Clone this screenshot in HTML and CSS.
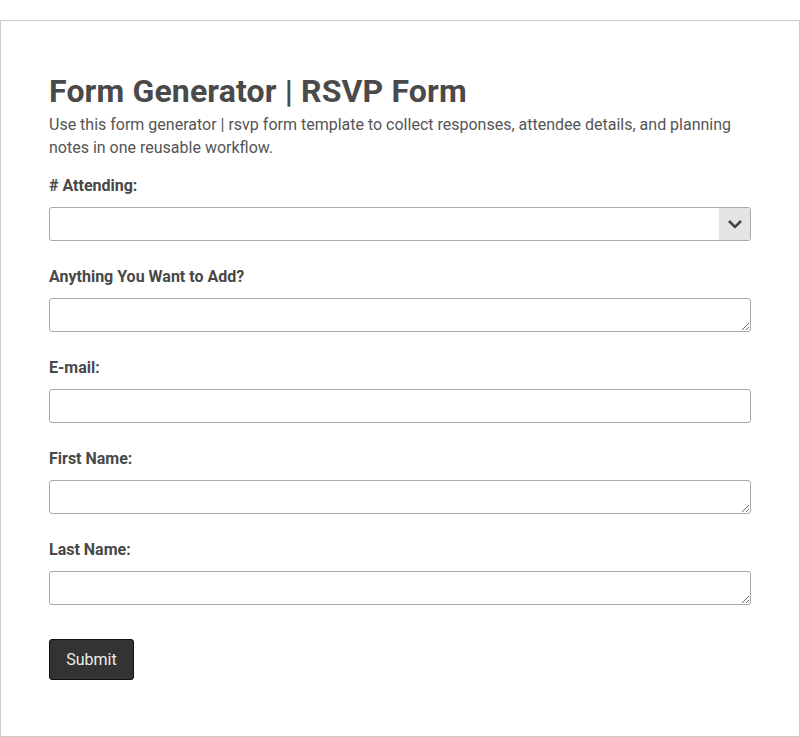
FILE: index.html
```html
<!DOCTYPE html>
<html lang="en">
<head>
    <meta charset="UTF-8">
    <meta name="viewport" content="width=device-width, initial-scale=1.0">
    <title>Form Generator | RSVP Form</title>
    <link rel="stylesheet" href="styles.css">
</head>
<body>
    <div class="container">
        <h1>Form Generator | RSVP Form</h1>
        <p class="intro">Use this form generator | rsvp form template to collect responses, attendee details, and planning notes in one reusable workflow.</p>

        <form class="form">
            <div class="field">
                <label for="attending"># Attending:</label>
                <div class="select-wrap">
                    <select id="attending">
                        <option value=""></option>
                        <option>1</option>
                        <option>2</option>
                        <option>3</option>
                        <option>4</option>
                    </select>
                    <span class="select-arrow">
                        <svg width="16" height="10" viewBox="0 0 16 10"><path d="M2 2l6 6 6-6" fill="none" stroke="#444" stroke-width="2.6"/></svg>
                    </span>
                </div>
            </div>

            <div class="field">
                <label for="add">Anything You Want to Add?</label>
                <textarea id="add"></textarea>
            </div>

            <div class="field">
                <label for="email">E-mail:</label>
                <input type="email" id="email">
            </div>

            <div class="field">
                <label for="first">First Name:</label>
                <textarea id="first"></textarea>
            </div>

            <div class="field">
                <label for="last">Last Name:</label>
                <textarea id="last"></textarea>
            </div>

            <button type="submit">Submit</button>
        </form>
    </div>
</body>
</html>
```

FILE: styles.css
```css
body {
    margin: 0;
    padding-top: 20px;
    background-color: #fff;
    color: #444;
    font-family: Roboto, "Liberation Sans", Arial, sans-serif;
}

.container {
    border: 1px solid #ccc;
    padding: 48px 48px 56px;
}

h1 {
    margin: 0;
    font-size: 32px;
    line-height: 44px;
    font-weight: bold;
    letter-spacing: 0.15px;
    color: #4a4a4a;
}

.intro {
    margin: 0 0 16px;
    font-size: 16px;
    line-height: 23px;
    color: #555;
}

.form {
    display: flex;
    flex-direction: column;
    align-items: flex-start;
}

.field {
    display: flex;
    flex-direction: column;
    width: 100%;
    margin-bottom: 25px;
}

label {
    font-size: 16px;
    line-height: 22px;
    font-weight: bold;
    margin-bottom: 10px;
    color: #484848;
}

input,
textarea,
select {
    box-sizing: border-box;
    width: 100%;
    height: 34px;
    margin: 0;
    border: 1px solid #aaa;
    border-radius: 3px;
    background-color: #fff;
    font-family: inherit;
    font-size: 16px;
    color: #444;
    padding: 6px 8px;
}

textarea {
    display: block;
    resize: vertical;
    min-height: 34px;
}

.select-wrap {
    position: relative;
}

select {
    -webkit-appearance: none;
    appearance: none;
    display: block;
}

.select-arrow {
    position: absolute;
    top: 1px;
    right: 1px;
    bottom: 1px;
    width: 31px;
    background-color: #e4e4e4;
    border-radius: 0 2px 2px 0;
    display: flex;
    justify-content: center;
    align-items: center;
    pointer-events: none;
}

button {
    margin-top: 9px;
    height: 41px;
    min-width: 85px;
    padding: 0 16px;
    font-family: inherit;
    font-size: 16px;
    color: #eee;
    background-color: #333;
    border: 1px solid #111;
    border-radius: 3px;
    cursor: pointer;
}

button:hover {
    background-color: #222;
}
```
